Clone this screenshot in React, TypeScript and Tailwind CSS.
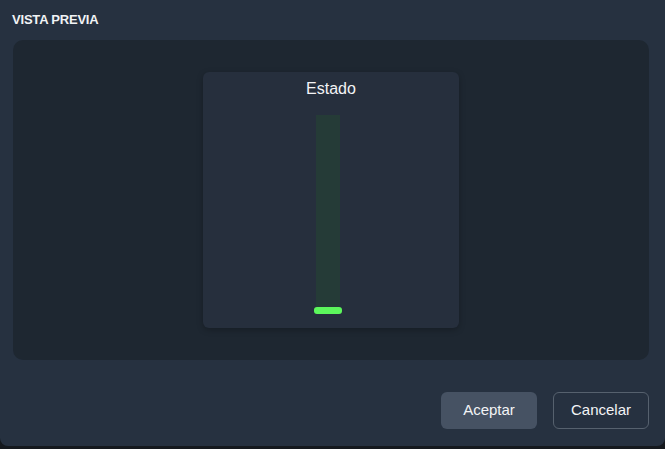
export default function App() {
  return (
    <div className="h-[449px] w-[665px] bg-[#15191e] font-['Liberation_Sans',Arial,sans-serif]">
      <div className="flex h-[446px] flex-col rounded-b-[8px] bg-[#263140]">
        <h2 className="px-[12px] pt-[12px] text-[13px] font-bold leading-[16px] tracking-[-0.2px] text-[#f1f3f5]">
          VISTA PREVIA
        </h2>

        <div className="ml-[13px] mr-[16px] mt-[12px] flex h-[320px] justify-center rounded-[10px] bg-[#1e2731] pt-[32px]">
          <div className="flex h-[256px] w-[256px] flex-col items-center rounded-[6px] bg-[#262f3d] shadow-[0_2px_6px_rgba(0,0,0,0.25)]">
            <p className="mt-[7px] text-[16px] leading-[20px] text-[#f3f4f6]">Estado</p>
            <div className="relative mr-[6px] mt-[16px] h-[193px] w-[24px] bg-[#253b37]">
              <div className="absolute bottom-[-6px] left-[-2px] h-[7px] w-[28px] rounded-[3px] bg-[#5cf75c]" />
            </div>
          </div>
        </div>

        <div className="mt-[32px] flex justify-end gap-[16px] pr-[16px]">
          <button
            type="button"
            className="h-[37px] w-[96px] rounded-[6px] bg-[#465263] text-[15px] text-[#f3f4f6]"
          >
            Aceptar
          </button>
          <button
            type="button"
            className="h-[37px] w-[96px] rounded-[6px] border border-[#56616e] text-[15px] text-[#f3f4f6]"
          >
            Cancelar
          </button>
        </div>
      </div>
    </div>
  );
}
